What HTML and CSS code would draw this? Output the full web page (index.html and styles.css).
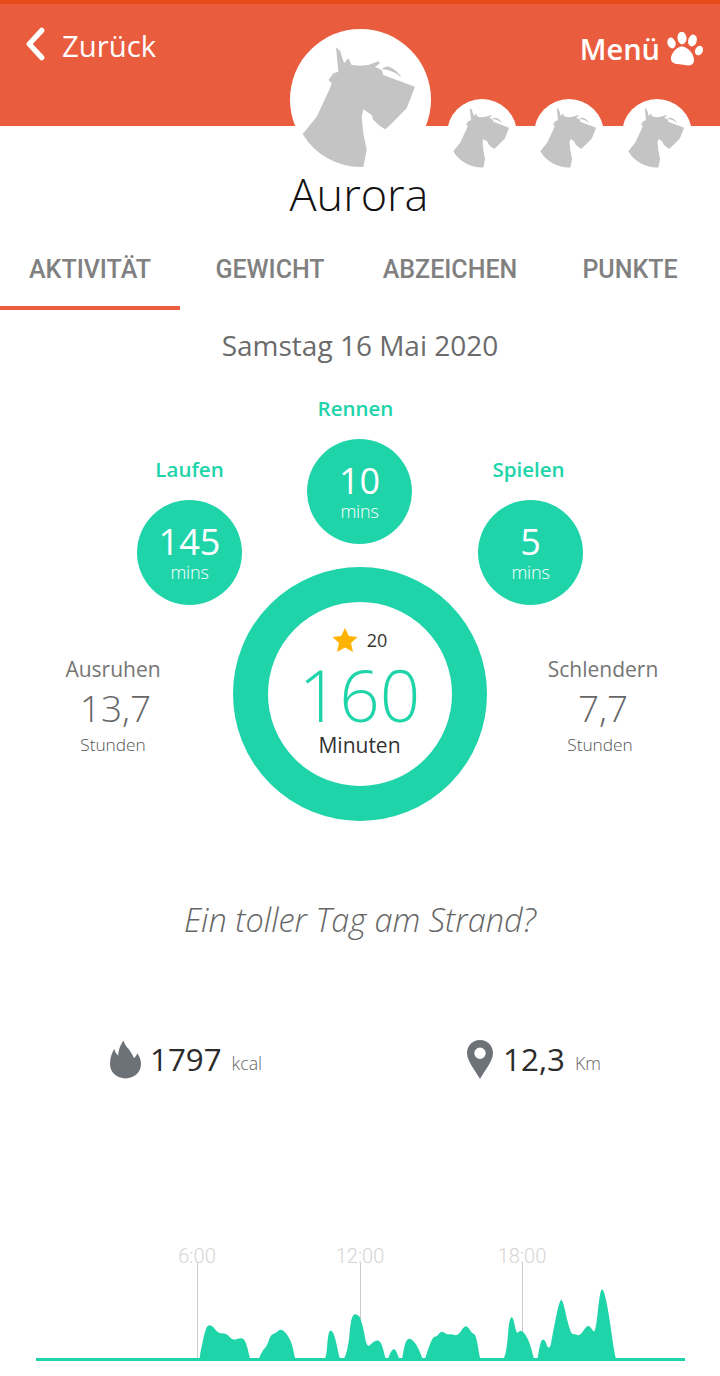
FILE: index.html
```html
<!DOCTYPE html>
<html lang="de">
<head>
<meta charset="utf-8">
<title>Aurora</title>
<link rel="stylesheet" href="styles.css">
</head>
<body>
<svg class="defs" width="0" height="0" aria-hidden="true">
  <symbol id="dog" viewBox="30 27 423 423">
    <path d="M168 82 L180 92 L192 130 L205 115 L215 135 L240 137 L265 135 L295 124 L300 130 L285 140 L305 150 L310 165 L405 200 L380 265 L345 300 L325 320 L315 328 L300 318 L280 300 L275 285 L250 268 L245 290 L250 340 L260 390 L250 441 A202 202 0 0 1 68 342 L110 290 L150 205 L155 190 L145 180 L160 160 L175 155 Z"/>
    <path d="M305 148 Q318 134 335 144 Q355 155 365 174 Q350 158 330 152 Q315 148 305 148 Z"/>
  </symbol>
</svg>

<header class="topbar">
  <a class="back">
    <svg class="chevron" viewBox="0 0 20 32"><path d="M16 3 L4 16 L16 29"/></svg>
    <span>Zurück</span>
  </a>
  <a class="menu">
    <span>Menü</span>
    <svg class="paw" viewBox="0 0 36 34">
      <ellipse cx="4.500" cy="11" rx="4" ry="5.500" transform="rotate(-18 4.500 11)"/>
      <ellipse cx="15" cy="6" rx="4.500" ry="6.300" transform="rotate(-6 15 6)"/>
      <ellipse cx="25.500" cy="8.500" rx="4.300" ry="6" transform="rotate(14 25.500 8.500)"/>
      <ellipse cx="32" cy="18.500" rx="3.800" ry="5" transform="rotate(24 32 18.500)"/>
      <path d="M15 14.500 C20 14.500 27 21 27 28 C27 33.500 22 34 18 33 C13 32 7 33 4.500 29 C2 24 9 14.500 15 14.500 Z"/>
    </svg>
  </a>
</header>

<div class="pets">
  <div class="avatar big"><svg><use href="#dog"/></svg></div>
  <div class="avatar"><svg><use href="#dog"/></svg></div>
  <div class="avatar"><svg><use href="#dog"/></svg></div>
  <div class="avatar"><svg><use href="#dog"/></svg></div>
</div>

<h1 class="name">Aurora</h1>

<nav class="tabs">
  <a class="tab active">AKTIVITÄT</a>
  <a class="tab">GEWICHT</a>
  <a class="tab">ABZEICHEN</a>
  <a class="tab">PUNKTE</a>
</nav>

<p class="date">Samstag 16 Mai 2020</p>

<section class="paws">
  <div class="toe low">
    <div class="toe-label">Laufen</div>
    <div class="bubble"><b>145</b><span>mins</span></div>
  </div>
  <div class="toe mid">
    <div class="toe-label">Rennen</div>
    <div class="bubble"><b>10</b><span>mins</span></div>
  </div>
  <div class="toe low last">
    <div class="toe-label">Spielen</div>
    <div class="bubble"><b>5</b><span>mins</span></div>
  </div>
</section>

<section class="summary">
  <div class="side left">
    <div class="side-title">Ausruhen</div>
    <div class="side-value">13,7</div>
    <div class="side-unit">Stunden</div>
  </div>
  <div class="ring">
    <div class="stars">
      <svg class="star" viewBox="0 0 26 26"><path d="M13 1 L16.800 9 L25.500 10 L19 16 L21 25 L13 20.500 L5 25 L7 16 L.500 10 L9.200 9 Z"/></svg>
      <span>20</span>
    </div>
    <div class="total">160</div>
    <div class="total-unit">Minuten</div>
  </div>
  <div class="side right">
    <div class="side-title">Schlendern</div>
    <div class="side-value">7,7</div>
    <div class="side-unit">Stunden</div>
  </div>
</section>

<p class="tagline">Ein toller Tag am Strand?</p>

<section class="metrics">
  <div class="metric kcal">
    <svg class="flame" viewBox="0 0 32 39"><path d="M14 0 C15 5 19 8 21.500 12 C23 14.500 24 16 24.500 18 C26.500 17 27.500 15 28 13 C30.500 16 32 20 32 24 C32 33 25 39 16 39 C7 39 0 33 0 24 C0 18 2 12.500 4.500 8.500 C5 11.500 6.500 14 8.500 15.500 C8.500 10 11 4 14 0 Z"/></svg>
    <span class="metric-value">1797</span>
    <span class="metric-unit">kcal</span>
  </div>
  <div class="metric km">
    <svg class="pin" viewBox="0 0 26 39"><path fill-rule="evenodd" d="M13 0 C20.500 0 26 5.700 26 13 C26 21 18 30 13 39 C8 30 0 21 0 13 C0 5.700 5.500 0 13 0 Z M13 7.500 A5.700 5.700 0 1 0 13 18.900 A5.700 5.700 0 1 0 13 7.500 Z"/></svg>
    <span class="metric-value">12,3</span>
    <span class="metric-unit">Km</span>
  </div>
</section>

<svg class="chart" viewBox="0 1240 720 136">
  <line class="grid-line" x1="197.500" y1="1262" x2="197.500" y2="1358"/>
  <line class="grid-line" x1="360.500" y1="1262" x2="360.500" y2="1358"/>
  <line class="grid-line" x1="522.500" y1="1262" x2="522.500" y2="1358"/>
  <text class="hour" x="197" y="1263">6:00</text>
  <text class="hour" x="360" y="1263">12:00</text>
  <text class="hour" x="522" y="1263">18:00</text>
  <rect class="baseline" x="36" y="1358" width="649" height="3"/>
  <g class="area" transform="translate(0 1230) scale(.33333)">
    <path d="M598 390 L601 369 Q605 350 611 321 Q618 292 623 288 Q628 284 634 287 Q640 290 647 300 Q655 310 667 310 Q680 310 689 321 Q698 332 711 327 Q725 322 731 328 Q738 335 744 361 Q750 388 752 390 Z"/>
    <path d="M775 390 Q785 365 792 357 Q800 350 806 332 Q812 315 818 313 Q825 312 833 304 Q842 297 848 301 Q855 305 865 320 Q875 335 880 361 Q885 388 888 390 Z"/>
    <path d="M973 390 Q980 380 982 340 Q985 305 990 302 Q995 300 1000 310 Q1005 320 1012 354 Q1018 385 1022 390 Z"/>
    <path d="M1030 390 Q1042 370 1048 320 Q1052 255 1064 253 Q1072 252 1080 262 Q1090 290 1095 322 Q1100 355 1110 345 Q1120 335 1127 332 Q1135 330 1140 335 Q1145 340 1151 364 Q1157 388 1158 390 Z"/>
    <path d="M1163 390 Q1172 362 1180 358 Q1187 356 1192 372 Q1198 388 1200 390 Z"/>
    <path d="M1206 390 Q1214 335 1222 329 Q1228 324 1234 328 Q1240 332 1248 343 Q1255 355 1262 372 Q1268 388 1272 390 Z"/>
    <path d="M1274 390 Q1295 320 1304 320 Q1312 320 1318 310 Q1325 302 1333 308 Q1342 315 1348 313 Q1355 312 1365 315 Q1375 318 1385 300 Q1395 285 1402 290 Q1408 295 1412 303 Q1415 310 1421 311 Q1428 312 1434 350 Q1440 388 1442 390 Z"/>
    <path d="M1508 390 Q1518 380 1523 325 Q1527 262 1535 262 Q1540 262 1545 290 Q1550 315 1556 306 Q1563 297 1574 311 Q1585 325 1594 356 Q1602 388 1604 390 Z"/>
    <path d="M1612 390 Q1620 335 1627 329 Q1635 326 1640 345 Q1647 362 1652 345 Q1660 300 1670 252 Q1680 205 1685 210 Q1690 215 1700 263 Q1712 312 1718 312 Q1725 312 1732 315 Q1740 318 1750 302 Q1760 286 1766 288 Q1772 290 1779 302 Q1786 315 1793 248 Q1800 180 1806 178 Q1812 180 1818 210 Q1825 240 1835 312 Q1845 385 1850 390 Z"/>
  </g>
</svg>
</body>
</html>
```
FILE: styles.css
```css
* { box-sizing: border-box; }
html, body { margin: 0; padding: 0; }
body {
  width: 720px;
  height: 1376px;
  overflow: hidden;
  background: #fff;
  font-family: "Open Sans", sans-serif;
  color: #666;
}
.defs { display: block; height: 0; }

.topbar {
  height: 126px;
  background: #ea5c3e;
  border-top: 4px solid #e84c1a;
  display: flex;
  justify-content: space-between;
  align-items: flex-start;
  padding: 22px 17px 0 25px;
  color: #fff;
}
.back { display: flex; align-items: center; gap: 16px; font-size: 29.3px; line-height: 40px; }
.chevron { width: 21px; height: 34px; margin-top: -4px; }
.chevron path { fill: none; stroke: #fff; stroke-width: 5px; stroke-linecap: round; stroke-linejoin: round; }
.menu { display: flex; align-items: center; gap: 7px; margin-top: 1px; font-size: 29px; font-weight: 600; line-height: 44px; }
.paw { width: 36px; height: 34px; fill: #fff; }

.pets {
  display: flex;
  align-items: flex-end;
  gap: 17.25px;
  height: 141px;
  margin-top: -97px;
  padding-left: 290px;
}
.avatar {
  width: 70px;
  height: 70px;
  margin-bottom: 1px;
  border-radius: 50%;
  background: #fff;
  overflow: hidden;
}
.avatar.big { width: 141px; height: 141px; margin: 0 -1.25px 0 0; }
.avatar svg { display: block; width: 100%; height: 100%; fill: #c4c4c4; }

.name {
  margin: 0;
  height: 58px;
  padding-right: 2px;
  font-size: 45px;
  line-height: 48px;
  font-weight: 300;
  color: #111;
  text-align: center;
}

.tabs { display: grid; grid-template-columns: repeat(4, 180px); margin-top: 2px; height: 80px; }
.tab {
  display: flex;
  justify-content: center;
  padding-top: 22px;
  font-family: Roboto, sans-serif;
  font-size: 25px;
  line-height: 36px;
  font-weight: 500;
  color: #808080;
}
.tab.active { border-bottom: 4px solid #ec5e3f; }

.date {
  margin: 15px 0 0;
  height: 40px;
  text-align: center;
  font-size: 28px;
  line-height: 40px;
  color: #6b6b6b;
}

.paws {
  display: flex;
  justify-content: center;
  align-items: flex-start;
  gap: 65px;
  margin-top: 31px;
  height: 171px;
}
.toe { width: 105px; display: flex; flex-direction: column; align-items: center; }
.toe.low { margin-top: 61px; }
.toe.mid { margin-right: 1px; }
.toe-label { height: 43px; font-size: 20.500px; line-height: 24px; font-weight: 600; color: #20d4aa; white-space: nowrap; }
.toe.mid .toe-label { transform: translateX(-4px); }
.toe.last .toe-label { transform: translateX(-2px); }
.bubble {
  width: 105px;
  height: 105px;
  border-radius: 50%;
  background: #20d4aa;
  color: #fff;
  display: flex;
  flex-direction: column;
  align-items: center;
  padding-top: 18px;
}
.bubble b { font-weight: 400; font-size: 36px; line-height: 48px; }
.bubble span { font-size: 18px; font-weight: 300; line-height: 20px; margin-top: -4px; letter-spacing: -.2px; }

.summary {
  display: grid;
  grid-template-columns: 226px 254px 1fr;
  column-gap: 7px;
  align-items: center;
}
.ring {
  width: 254px;
  height: 254px;
  border: 35px solid #20d4aa;
  border-radius: 50%;
  background: #fff;
  display: flex;
  flex-direction: column;
  align-items: center;
  padding: 24px 1px 0 0;
}
.stars { display: flex; align-items: center; gap: 9px; height: 28px; font-size: 18px; color: #333; }
.star { width: 26px; height: 26px; fill: #ffb300; }
.total { font-size: 71px; line-height: 74px; font-weight: 350; color: #20d4aa; margin-top: 4px; }
.total-unit { font-size: 21px; line-height: 28px; color: #333; margin-top: -1px; }

.side { display: flex; flex-direction: column; align-items: center; padding-top: 24px; }
.side.right { padding-right: 8px; }
.side-title { font-size: 21px; line-height: 28px; color: #757575; }
.side-value { font-size: 37px; line-height: 48px; margin-top: 1px; font-weight: 350; color: #666; }
.side.left .side-value { margin-left: 5px; }
.side-unit { font-size: 17.300px; line-height: 24px; margin-top: 1px; font-weight: 300; color: #555; }
.side.right .side-unit { margin-right: 6px; }

.tagline {
  margin: 77px 0 0;
  height: 44px;
  text-align: center;
  font-size: 32.500px;
  line-height: 44px;
  font-weight: 300;
  font-style: italic;
  color: #666;
}

.metrics { display: flex; margin-top: 95px; height: 44px; padding-left: 110px; }
.metric { display: flex; align-items: center; }
.metric.km { margin-left: 205px; }
.flame { width: 31px; height: 39px; fill: #6d7178; margin-right: 9px; }
.pin { width: 26px; height: 39px; fill: #6d7178; margin-right: 10px; }
.metric-value { font-size: 31.300px; font-weight: 370; color: #2b2b2b; margin-right: 10px; }
.metric-unit { font-size: 17.800px; font-weight: 300; color: #666; margin-top: 8px; }

.chart { display: block; position: absolute; left: 0; top: 1240px; width: 720px; height: 136px; }
.grid-line { stroke: #ccc; stroke-width: 1px; }
.hour { font-family: Roboto, sans-serif; font-size: 20px; font-weight: 300; fill: #d5d5d5; text-anchor: middle; }
.baseline { fill: #20d4aa; }
.area path { fill: #20d4aa; }
```
